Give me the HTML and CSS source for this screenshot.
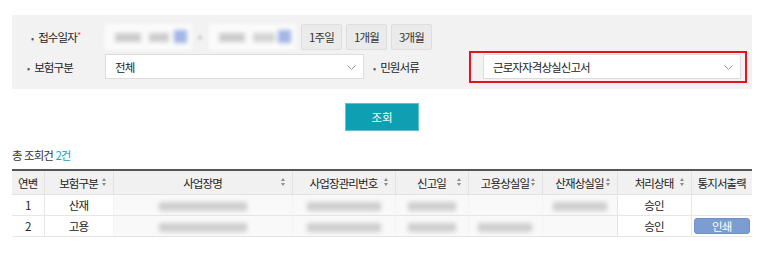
FILE: index.html
```html
<!DOCTYPE html>
<html lang="ko">
<head>
    <meta charset="UTF-8">
    <meta name="viewport" content="width=device-width, initial-scale=1.0">
    <title>민원 조회</title>
    <link rel="stylesheet" href="styles.css">
</head>
<body>
    <div class="page">
        <!-- 검색 조건 -->
        <div class="search-box">
            <div class="search-row">
                <div class="label label-date"><b class="dot">•</b>접수일자<span class="req">*</span></div>
                <div class="date-field">
                    <div class="date-input">
                        <span class="blur b1"></span><span class="blur b2"></span><span class="cal"></span>
                    </div>
                    <span class="tilde"></span>
                    <div class="date-input">
                        <span class="blur b1"></span><span class="blur b3"></span><span class="cal"></span>
                    </div>
                </div>
                <button class="period-btn">1주일</button>
                <button class="period-btn">1개월</button>
                <button class="period-btn">3개월</button>
            </div>
            <div class="search-row">
                <div class="label"><b class="dot">•</b>보험구분</div>
                <div class="select select-short">
                    <span>전체</span>
                    <svg class="chev" width="9" height="5" viewBox="0 0 9 5"><polyline points="0.5,0.5 4.5,4.5 8.5,0.5" fill="none" stroke="#999" stroke-width="1"/></svg>
                </div>
                <div class="label label-doc"><b class="dot">•</b>민원서류</div>
                <div class="highlight">
                    <div class="select select-long">
                        <span>근로자자격상실신고서</span>
                        <svg class="chev" width="9" height="5" viewBox="0 0 9 5"><polyline points="0.5,0.5 4.5,4.5 8.5,0.5" fill="none" stroke="#999" stroke-width="1"/></svg>
                    </div>
                </div>
            </div>
        </div>

        <div class="btn-area">
            <button class="search-btn">조회</button>
        </div>

        <div class="total">총 조회건 <span class="count">2건</span></div>

        <!-- 결과 목록 -->
        <table class="result">
            <colgroup>
                <col style="width:32px">
                <col style="width:69px">
                <col style="width:179px">
                <col style="width:103px">
                <col style="width:73px">
                <col style="width:74px">
                <col style="width:75px">
                <col style="width:74px">
                <col style="width:61px">
            </colgroup>
            <thead>
                <tr>
                    <th>연번<i class="sort"></i></th>
                    <th>보험구분<i class="sort"></i></th>
                    <th>사업장명<i class="sort"></i></th>
                    <th>사업장관리번호<i class="sort"></i></th>
                    <th>신고일<i class="sort"></i></th>
                    <th>고용상실일<i class="sort"></i></th>
                    <th>산재상실일<i class="sort"></i></th>
                    <th>처리상태<i class="sort"></i></th>
                    <th>통지서출력<i class="sort"></i></th>
                </tr>
            </thead>
            <tbody>
                <tr>
                    <td>1</td>
                    <td>산재</td>
                    <td class="masked"><span class="blur w88"></span></td>
                    <td class="masked"><span class="blur w74"></span></td>
                    <td class="masked"><span class="blur w48"></span></td>
                    <td class="masked"></td>
                    <td class="masked"><span class="blur w54"></span></td>
                    <td>승인</td>
                    <td></td>
                </tr>
                <tr>
                    <td>2</td>
                    <td>고용</td>
                    <td class="masked"><span class="blur w88"></span></td>
                    <td class="masked"><span class="blur w74"></span></td>
                    <td class="masked"><span class="blur w48"></span></td>
                    <td class="masked"><span class="blur w54"></span></td>
                    <td class="masked"></td>
                    <td>승인</td>
                    <td><button class="print-btn">인쇄</button></td>
                </tr>
            </tbody>
        </table>
    </div>
</body>
</html>
```
FILE: styles.css
```css
body {
    margin: 0;
    background: #fff;
    font-family: "Noto Sans CJK KR", "Noto Sans", sans-serif;
    font-size: 11.5px;
    letter-spacing: -0.9px;
    color: #222;
}

.page {
    padding: 15px 21px 0 12px;
}

/* 검색 영역 */
.search-box {
    background: #f2f2f2;
    height: 74px;
    box-sizing: border-box;
    padding: 9px 0 0 0;
}

.search-row {
    display: flex;
    align-items: center;
    height: 26px;
    margin-bottom: 4px;
}

.search-row:last-child {
    height: 25px;
}

.label {
    width: 93px;
    box-sizing: border-box;
    padding-left: 15px;
}

.label-date {
    padding-left: 19px;
}

.dot {
    font-weight: normal;
    font-size: 9px;
    color: #555;
    margin-right: 5px;
}

.req {
    color: #e53935;
    font-size: 9px;
    vertical-align: top;
}

.date-field {
    display: flex;
    align-items: center;
    width: 191px;
    height: 26px;
    margin-right: 5px;
}

.date-input {
    position: relative;
    width: 89px;
    height: 26px;
    background: #fbfbfb;
    display: flex;
    align-items: center;
    padding-left: 10px;
    box-sizing: border-box;
    gap: 8px;
    filter: blur(2px);
}

.tilde {
    width: 5px;
    height: 5px;
    background: #d8d8d8;
    margin: 0 7px 0 6px;
    filter: blur(1px);
}

.blur {
    display: inline-block;
    height: 9px;
    background: #cdcdcd;
    border-radius: 1px;
}

.b1 { width: 26px; }
.b2 { width: 20px; }
.b3 { width: 22px; background: #d4d4d4; }

.cal {
    position: absolute;
    right: 5px;
    top: 6px;
    width: 13px;
    height: 13px;
    background: #a3b6e6;
}

.period-btn {
    font-family: inherit;
    font-size: 11.5px;
    letter-spacing: -0.9px;
    color: #333;
    height: 26px;
    width: 41px;
    padding: 0;
    margin-right: 4px;
    background: #ebebeb;
    border: 1px solid #dedede;
    border-radius: 2px;
}

.select {
    position: relative;
    height: 25px;
    background: #fff;
    border: 1px solid #dcdcdc;
    box-sizing: border-box;
    display: flex;
    align-items: center;
    padding-left: 9px;
}

.select-short {
    width: 259px;
}

.select-long {
    width: 258px;
}

.chev {
    position: absolute;
    right: 7px;
    top: 10px;
}

.label-doc {
    width: 105px;
    padding-left: 9px;
}

.highlight {
    border: 2px solid #e3141b;
    padding: 1px 4px 2px 12px;
    margin: -3px 0 -4px 0;
}

/* 조회 버튼 */
.btn-area {
    display: flex;
    justify-content: center;
    margin-top: 14px;
}

.search-btn {
    width: 74px;
    height: 28px;
    background: #0ea0b2;
    border: 1px solid #5fc2cd;
    color: #fff;
    font-family: inherit;
    font-size: 11.5px;
}

.total {
    margin-top: 16px;
    height: 22px;
    line-height: 16px;
    color: #333;
}

.count {
    color: #1aa3bd;
}

/* 결과 테이블 */
.result {
    width: 740px;
    border-collapse: collapse;
    table-layout: fixed;
    border-top: 2px solid #555;
}

.result th {
    position: relative;
    height: 23px;
    background: #f1f1f1;
    font-weight: normal;
    color: #222;
    border-left: 1px solid #e2e2e2;
    border-bottom: 1px solid #e2e2e2;
    padding: 0;
    white-space: nowrap;
}

.result th:first-child,
.result td:first-child {
    border-left: none;
}

.sort {
    position: absolute;
    right: 6px;
    top: 7px;
    width: 5px;
    height: 8px;
}

.sort::before,
.sort::after {
    content: "";
    position: absolute;
    left: 0;
    border-left: 2.5px solid transparent;
    border-right: 2.5px solid transparent;
}

.sort::before {
    top: 0;
    border-bottom: 3px solid #8a8a8a;
}

.sort::after {
    bottom: 0;
    border-top: 3px solid #8a8a8a;
}

.result td {
    height: 20px;
    padding: 0;
    text-align: center;
    border-left: 1px solid #e6e6e6;
    border-bottom: 1px solid #e6e6e6;
}

.result td.masked {
    background: #f9f9f9;
    border-left-color: #f4f4f4;
}

.result td .blur {
    height: 9px;
    background: #cfcfcf;
    filter: blur(2px);
    vertical-align: middle;
}

.w88 { width: 88px; }
.w74 { width: 74px; }
.w54 { width: 54px; }
.w48 { width: 48px; }

.print-btn {
    width: 56px;
    height: 16px;
    padding: 0;
    background: #7b9dd2;
    border: 1px solid #6e91c9;
    border-radius: 3px;
    color: #fff;
    font-family: inherit;
    font-size: 11.5px;
    letter-spacing: -0.9px;
    line-height: 14px;
}
```
